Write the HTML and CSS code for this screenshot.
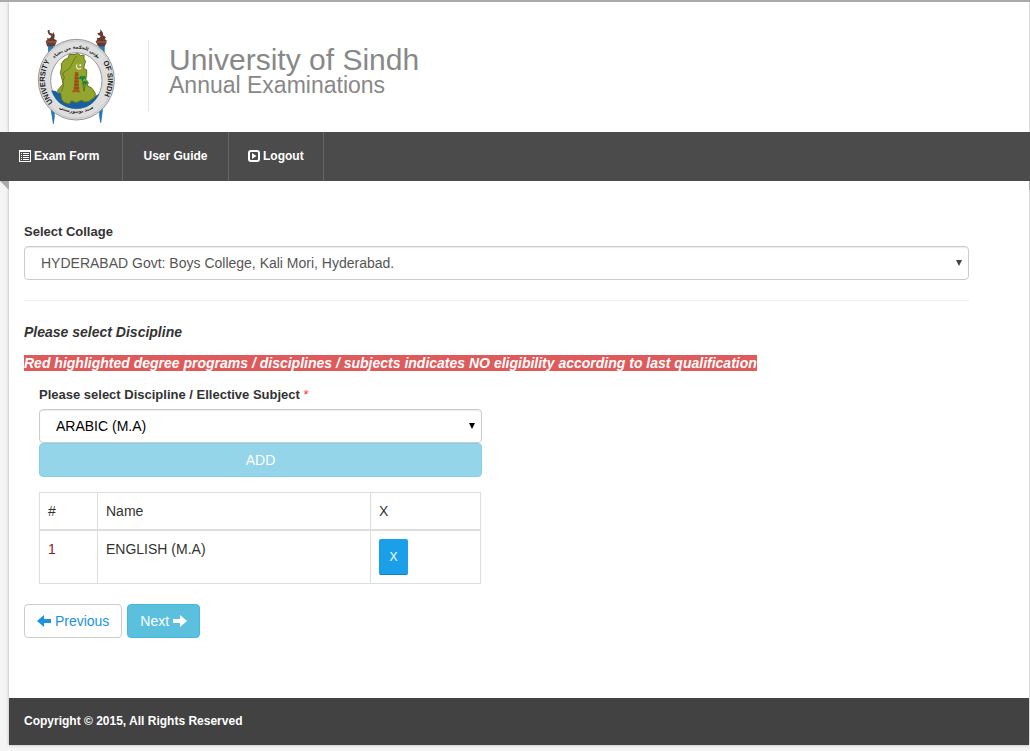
FILE: index.html
```html
<!DOCTYPE html>
<html lang="en">
<head>
<meta charset="utf-8">
<title>University of Sindh - Annual Examinations</title>
<link rel="stylesheet" href="styles.css">
</head>
<body>
<div class="page">
  <header class="header">
    <svg class="crest" viewBox="111 84 234 291" role="img" aria-label="University of Sindh crest">
      <defs>
        <path id="ring-left" d="M162 310A94 100 0 0 1 162 169"/>
        <path id="ring-right" d="M302 176A94 100 0 0 1 296 310"/>
        <path id="ring-top" d="M159 182A88 92 0 0 1 299 182"/>
        <path id="ring-bottom" d="M160 312A105 108 0 0 0 298 312"/>
      </defs>
      <g fill="#1585cf" stroke="#205986" stroke-width="2">
        <path d="M145 138H159L163 350L160 371L157 350L152 322Z"/>
        <path d="M298 138H313L308 322L305 349L302 368L299 349Z"/>
      </g>
      <g fill="#683a31">
        <path d="M137 123L142 120L141 114Q151 119 154 107Q142 105 143 91Q147 88 150 92Q145 99 158 101L160 96Q167 106 162 116L171 122L168 129L164 139H141Z"/>
        <path d="M287 124L292 120L290 113Q300 116 302 108Q293 106 292 99Q304 101 300 88Q311 97 309 106L318 112L314 118L320 121L319 130L314 139H294Z"/>
      </g>
      <path d="M140 126H168M290 126H318" stroke="#986b60" stroke-width="3"/>
      <ellipse cx="229" cy="239" rx="114" ry="121" fill="#dedede" stroke="#969696" stroke-width="3"/>
      <ellipse cx="229" cy="239" rx="109" ry="116" fill="none" stroke="#bdbdbd" stroke-width="2"/>
      <ellipse cx="229" cy="242" rx="77" ry="84" fill="#fff" stroke="#999" stroke-width="3"/>
      <path d="M154 272Q164 270 175 278L284 289L298 281Q276 326 229 326Q174 325 154 272Z" fill="#1761a1"/>
      <path d="M181 218Q187 204 184 191L192 180L204 174L208 163L222 164L233 160L242 167L252 165L252 177L257 184L253 195L251 205L260 210L260 227L257 237L265 248L261 256L276 265L286 280L285 291L267 304L254 306L245 301L228 308L215 302L207 312L192 307L185 298L182 280L172 274L177 266L190 251L186 237Z" fill="#94a52e" stroke="#68751d" stroke-width="3"/>
      <path d="M229 168L218 187L209 205L188 219L193 233L188 245L190 258L184 275" fill="none" stroke="#687922" stroke-width="3"/>
      <path d="M225 216H235L237 269L242 277H214L221 268Z" fill="#a45d20"/>
      <path d="M225 224H235M224 234H236M224 244H236M223 254H237M222 264H239" stroke="#6e401a" stroke-width="2"/>
      <path d="M247 235L251 272M256 250L253 274" stroke="#517c21" stroke-width="3"/>
      <path d="M236 237L241 228L248 229L255 227L259 236L252 236L247 244L243 237ZM247 247L254 242L263 247L260 253L254 251L251 258Z" fill="#168742"/>
      <path d="M234 191A9 9 0 1 0 246 200A8 8 0 1 1 234 191Z" fill="#fff"/>
      <circle cx="241" cy="196" r="3" fill="#fff"/>
      <g class="crest-text">
        <text><textPath href="#ring-left" startOffset="4">UNIVERSITY</textPath></text>
        <text><textPath href="#ring-right" startOffset="12">OF SINDH</textPath></text>
        <text class="arabic" text-anchor="middle"><textPath href="#ring-top" startOffset="50%">يؤتي الحكمة من يشاء</textPath></text>
        <text class="arabic" text-anchor="middle"><textPath href="#ring-bottom" startOffset="50%">سنڌ يونيورسٽي</textPath></text>
      </g>
    </svg>
    <div class="brand">
      <h1>University of Sindh</h1>
      <p>Annual Examinations</p>
    </div>
  </header>

  <nav class="nav" aria-label="Main">
    <a class="nav-form" href="#form"><svg class="nav-icon" viewBox="0 0 12 12" aria-hidden="true"><path d="M0 0H12V12H0ZM1 2V11H11V2Z" fill="currentColor" fill-rule="evenodd"/><path d="M2 3.5H3M4 3.5H10M2 5.5H3M4 5.5H10M2 7.5H3M4 7.5H10M2 9.5H3M4 9.5H10" stroke="currentColor"/></svg>Exam Form</a>
    <a class="nav-guide" href="#guide">User Guide</a>
    <a class="nav-logout" href="#logout"><svg class="nav-icon" viewBox="0 0 12 12" aria-hidden="true"><rect x="1" y="1" width="10" height="10" rx="2" fill="none" stroke="currentColor" stroke-width="2"/><path d="M4 3L8.500 6L4 9Z" fill="currentColor"/></svg>Logout</a>
  </nav>

  <main class="content" id="form">
    <label class="label" for="college">Select Collage</label>
    <div class="select muted">
      <select id="college"><option>HYDERABAD Govt: Boys College, Kali Mori, Hyderabad.</option></select>
    </div>
    <hr>
    <h2>Please select Discipline</h2>
    <p class="notice"><mark>Red highlighted degree programs / disciplines / subjects indicates NO eligibility according to last qualification</mark></p>

    <section class="discipline">
      <label class="label" for="subject">Please select Discipline / Ellective Subject <span class="required">*</span></label>
      <div class="select">
        <select id="subject"><option>ARABIC (M.A)</option></select>
      </div>
      <button class="btn add" type="button" disabled>ADD</button>
      <table>
        <thead><tr><th class="num">#</th><th>Name</th><th class="action">X</th></tr></thead>
        <tbody><tr><td class="index">1</td><td>ENGLISH (M.A)</td><td><button class="remove" type="button" aria-label="Remove ENGLISH (M.A)">X</button></td></tr></tbody>
      </table>
    </section>

    <div class="pager">
      <button class="btn previous" type="button"><svg class="arrow" viewBox="0 0 14 12" fill="currentColor" aria-hidden="true"><path d="M0 6L7 0V4H14V8H7V12Z"/></svg> Previous</button>
      <button class="btn next" type="button">Next <svg class="arrow" viewBox="0 0 14 12" fill="currentColor" aria-hidden="true"><path d="M14 6L7 0V4H0V8H7V12Z"/></svg></button>
    </div>
  </main>
  <footer class="footer">Copyright © 2015, All Rights Reserved</footer>
</div>
</body>
</html>
```
FILE: styles.css
```css
* { box-sizing: border-box; }

body {
  margin: 0;
  padding: 0 1px 6px 9px;
  border-top: 2px solid #aaa;
  background: #f4f4f4;
  color: #333;
  font: 14px/20px "Liberation Sans", Arial, sans-serif;
}

.page {
  background: #fff;
  box-shadow: 0 0 3px rgba(0, 0, 0, .3);
}

.header {
  display: flex;
  align-items: center;
  gap: 33px;
  padding: 20px 28px 0;
  height: 130px;
}

.crest { width: 78px; height: 97px; margin-bottom: 2px; }
.crest-text { font: bold 22px "Liberation Sans", Arial, sans-serif; fill: #222; }
.arabic { font: bold 14px "DejaVu Sans", sans-serif; }

.brand {
  height: 71px;
  margin-bottom: 4px;
  padding: 4px 0 0 20px;
  border-left: 1px solid #e4e4e4;
  color: #888;
}
.brand h1 { margin: 0; font-size: 30px; font-weight: normal; line-height: 32px; }
.brand p { margin: 0; font-size: 23px; line-height: 18px; }

.nav {
  position: relative;
  display: flex;
  height: 49px;
  margin: 0 -1px 0 -9px;
  background: #4b4b4b;
}
.nav::before,
.nav::after {
  content: "";
  position: absolute;
  top: 100%;
  height: 9px;
  background: #aaa;
}
.nav::before { left: 0; width: 9px; clip-path: polygon(0 0, 100% 0, 100% 100%); }
.nav::after { right: 0; width: 1px; }
.nav a {
  padding: 14px 19px;
  border-right: 1px solid #666;
  color: #fff;
  font-size: 12px;
  font-weight: bold;
  text-decoration: none;
}
.nav .nav-form { min-width: 123px; }
.nav .nav-guide { min-width: 106px; text-align: center; }
.nav .nav-logout { min-width: 94px; }
.nav-icon { width: 12px; height: 12px; margin-right: 3px; vertical-align: -2px; }

.content { padding: 41px 60px 60px 15px; }

.label { display: block; margin-bottom: 4px; font-size: 13px; font-weight: bold; }
.required { color: #f33; font-weight: normal; }

.select { position: relative; }
.select::after {
  content: "";
  position: absolute;
  top: 14px;
  right: 7px;
  width: 6px;
  height: 6px;
  background: #000;
  clip-path: polygon(0 0, 100% 0, 50% 100%);
  pointer-events: none;
}
.select select {
  display: block;
  width: 100%;
  height: 34px;
  padding: 0 24px 0 16px;
  border: 1px solid #ccc;
  border-radius: 4px;
  background: #fff;
  box-shadow: inset 0 1px 1px rgba(0, 0, 0, .08);
  color: #000;
  font: inherit;
  appearance: none;
}
.muted select { color: #555; }
.muted::after { background: #444; }

hr { margin: 20px 0; border: 0; border-top: 1px solid #eee; }

h2 { margin: 0 0 10px; font-size: 14px; font-style: italic; line-height: 22px; }
.notice { margin: 0 0 12px; font-weight: bold; font-style: italic; }
.notice mark { background: #df5a5a; color: #fff; }

.discipline { width: 473px; max-width: 100%; padding: 0 15px; }

.btn {
  height: 34px;
  padding: 0 12px;
  border: 1px solid #46b8da;
  border-radius: 4px;
  background: #5bc0de;
  color: #fff;
  font: inherit;
}
.add { display: block; width: 100%; opacity: .65; }

table { width: 442px; max-width: 100%; margin: 15px 0 20px; border-collapse: collapse; }
th, td {
  padding: 8px;
  border: 1px solid #ddd;
  font-weight: normal;
  text-align: left;
  vertical-align: top;
}
th { border-bottom-width: 2px; }
.num { width: 58px; }
.action { width: 110px; }
.index { color: #8b1a1a; }

.remove {
  display: block;
  width: 29px;
  height: 36px;
  padding: 0;
  border: 0;
  border-bottom: 1px solid #1382c0;
  border-radius: 2px;
  background: #1a9fe8;
  color: #fff;
  font: 12px "Liberation Sans", Arial, sans-serif;
}

.pager { display: flex; gap: 5px; }
.previous { border-color: #ccc; background: #fff; color: #1a93e0; }
.arrow { width: 14px; height: 12px; vertical-align: -1px; }

.footer {
  padding: 13px 15px 14px;
  background: #424242;
  color: #fff;
  font-size: 12px;
  font-weight: bold;
}
```
